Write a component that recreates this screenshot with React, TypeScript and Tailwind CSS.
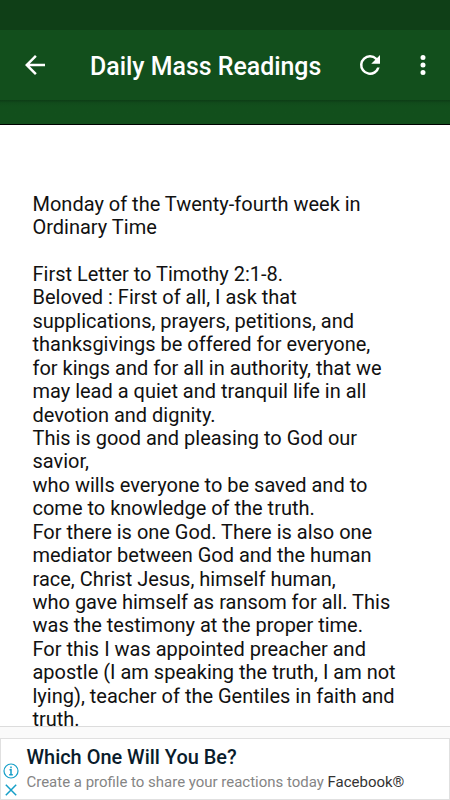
const lines = [
  "Monday of the Twenty-fourth week in",
  "Ordinary Time",
  "",
  "First Letter to Timothy 2:1-8.",
  "Beloved : First of all, I ask that",
  "supplications, prayers, petitions, and",
  "thanksgivings be offered for everyone,",
  "for kings and for all in authority, that we",
  "may lead a quiet and tranquil life in all",
  "devotion and dignity.",
  "This is good and pleasing to God our",
  "savior,",
  "who wills everyone to be saved and to",
  "come to knowledge of the truth.",
  "For there is one God. There is also one",
  "mediator between God and the human",
  "race, Christ Jesus, himself human,",
  "who gave himself as ransom for all. This",
  "was the testimony at the proper time.",
  "For this I was appointed preacher and",
  "apostle (I am speaking the truth, I am not",
  "lying), teacher of the Gentiles in faith and",
  "truth.",
];

export default function App() {
  return (
    <div className="flex h-[800px] w-[450px] flex-col overflow-hidden bg-white font-[Roboto,sans-serif]">
      <div className="h-[30px] shrink-0 bg-[#0f3f17]" />
      <header className="flex h-[70px] shrink-0 items-center bg-[#124f1c] text-white">
        <svg className="ml-[20px] size-[30px] shrink-0" viewBox="0 0 24 24" fill="currentColor">
          <path d="M20 11H7.83l5.59-5.59L12 4l-8 8 8 8 1.41-1.41L7.83 13H20v-2z" />
        </svg>
        <h1 className="ml-[40px] w-[265px] shrink-0 whitespace-nowrap pt-[3px] text-[24.9px] font-medium">Daily Mass Readings</h1>
        <svg className="size-[30px] shrink-0" viewBox="0 0 24 24" fill="currentColor">
          <path d="M17.65 6.35A7.96 7.96 0 0 0 12 4a8 8 0 1 0 7.73 10h-2.08A6 6 0 1 1 12 6c1.66 0 3.14.69 4.22 1.78L13 11h7V4l-2.35 2.35z" />
        </svg>
        <svg className="ml-[22.5px] size-[30px] shrink-0" viewBox="0 0 24 24" fill="currentColor">
          <path d="M12 8a2 2 0 1 0 0-4 2 2 0 0 0 0 4zm0 2a2 2 0 1 0 0 4 2 2 0 0 0 0-4zm0 6a2 2 0 1 0 0 4 2 2 0 0 0 0-4z" />
        </svg>
      </header>
      <div className="h-[25px] shrink-0 border-b border-black bg-[#124f1c] bg-linear-to-b from-[#0d3d16] via-[#114b1b] via-[12%] to-[#124f1c] to-[28%]" />
      <main className="h-[601px] shrink-0 overflow-hidden pl-[32.5px] pt-[67.6px] text-[19.99px] leading-[23.45px] text-[#111]">
        {lines.map((line, i) => (
          <div key={i} className="h-[23.45px] whitespace-nowrap">{line}</div>
        ))}
      </main>
      <footer className="flex h-[74px] shrink-0 flex-col border-t border-[#dcdcdc] bg-[#fafafa] pt-[11px]">
        <div className="flex grow border border-[#e0e0e0] bg-white">
          <div className="flex w-[25.5px] shrink-0 flex-col pl-[1.5px] pt-[23.5px] text-[#159fc8]">
            <svg className="size-[16px]" viewBox="0 0 16 16" fill="none" stroke="currentColor" strokeWidth="1.2">
              <circle cx="8" cy="8" r="7" />
              <path d="M6.5 6.7H8v4.8M6.2 11.7h3.6M8 3.5v1.7" strokeWidth="1.5" />
            </svg>
            <svg className="mt-[3px] size-[16px]" viewBox="0 0 16 16" fill="none" stroke="currentColor" strokeWidth="1.5">
              <path d="m2.8 2.8 10.4 10.4M13.2 2.8 2.8 13.2" />
            </svg>
          </div>
          <div className="whitespace-nowrap pt-[5px]">
            <div className="text-[19.95px] font-medium leading-[26px] text-[#091c2c]">Which One Will You Be?</div>
            <div className="text-[14.98px] leading-[24px] text-[#858585]">Create a profile to share your reactions today <span className="text-[#333]">Facebook®</span></div>
          </div>
        </div>
      </footer>
    </div>
  );
}
